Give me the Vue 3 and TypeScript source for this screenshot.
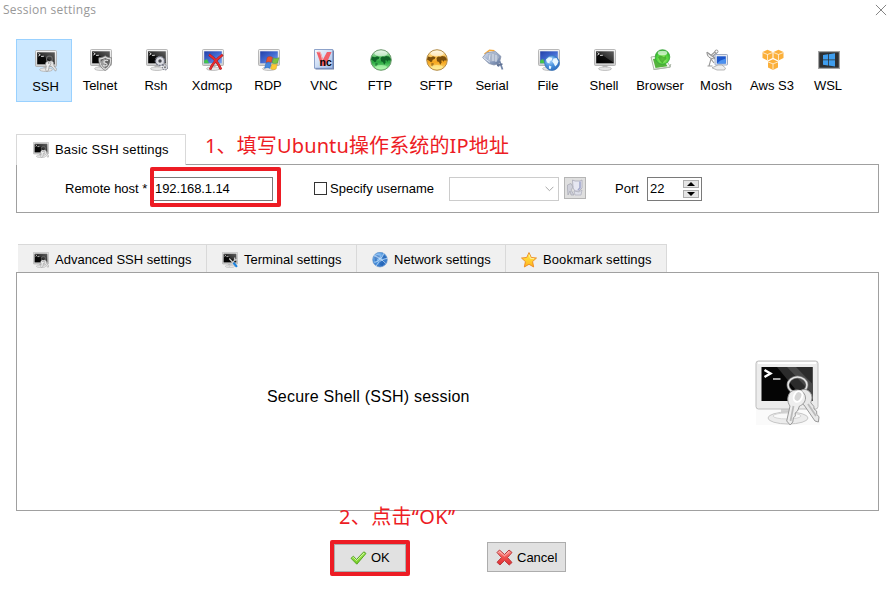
<script setup lang="ts">
import { ref } from 'vue'

interface SessionType {
  id: string
  label: string
}

interface SettingsTab {
  icon: string
  label: string
  size: string
}

const sessions: SessionType[] = [
  { id: 'ssh', label: 'SSH' },
  { id: 'telnet', label: 'Telnet' },
  { id: 'rsh', label: 'Rsh' },
  { id: 'xdmcp', label: 'Xdmcp' },
  { id: 'rdp', label: 'RDP' },
  { id: 'vnc', label: 'VNC' },
  { id: 'ftp', label: 'FTP' },
  { id: 'sftp', label: 'SFTP' },
  { id: 'serial', label: 'Serial' },
  { id: 'file', label: 'File' },
  { id: 'shell', label: 'Shell' },
  { id: 'browser', label: 'Browser' },
  { id: 'mosh', label: 'Mosh' },
  { id: 'aws', label: 'Aws S3' },
  { id: 'wsl', label: 'WSL' },
]

const tabs: SettingsTab[] = [
  { icon: 'ssh', label: 'Advanced SSH settings', size: 'advanced' },
  { icon: 'terminal', label: 'Terminal settings', size: 'terminal' },
  { icon: 'network', label: 'Network settings', size: 'network' },
  { icon: 'star', label: 'Bookmark settings', size: 'bookmark' },
]

const selected = ref('ssh')
const host = ref('192.168.1.14')
const useName = ref(false)
const port = ref('22')
</script>

<template>
  <div class="window">
    <svg class="sprite" width="0" height="0" aria-hidden="true">
      <defs>
        <linearGradient id="gBezel" x1="0" y1="0" x2="0" y2="1">
          <stop offset="0" stop-color="#f4f4f4" />
          <stop offset="1" stop-color="#cfcfcf" />
        </linearGradient>
        <linearGradient id="gScreen" x1="0" y1="1" x2="1" y2="0">
          <stop offset="0" stop-color="#000" />
          <stop offset=".5" stop-color="#0c0c0c" />
          <stop offset=".54" stop-color="#333" />
          <stop offset="1" stop-color="#606060" />
        </linearGradient>
        <linearGradient id="gBlue" x1="0" y1="0" x2="1" y2="1">
          <stop offset="0" stop-color="#2440a8" />
          <stop offset=".5" stop-color="#4169d0" />
          <stop offset="1" stop-color="#7ea6f0" />
        </linearGradient>
        <linearGradient id="gGreen" x1="0" y1="0" x2="0" y2="1">
          <stop offset="0" stop-color="#d8f0d8" />
          <stop offset=".35" stop-color="#5cc267" />
          <stop offset=".6" stop-color="#2aa740" />
          <stop offset="1" stop-color="#9df59d" />
        </linearGradient>
        <linearGradient id="gGold" x1="0" y1="0" x2="0" y2="1">
          <stop offset="0" stop-color="#fff4cc" />
          <stop offset=".35" stop-color="#fbc455" />
          <stop offset=".6" stop-color="#f5a51c" />
          <stop offset="1" stop-color="#ffe58a" />
        </linearGradient>
        <linearGradient id="gSteel" x1="0" y1="0" x2="1" y2="1">
          <stop offset="0" stop-color="#dfe6f2" />
          <stop offset=".5" stop-color="#9aabc9" />
          <stop offset="1" stop-color="#60759c" />
        </linearGradient>
        <radialGradient id="gGlobe" cx=".35" cy=".3" r=".8">
          <stop offset="0" stop-color="#b6dcff" />
          <stop offset=".5" stop-color="#4a93de" />
          <stop offset="1" stop-color="#2766bb" />
        </radialGradient>
        <radialGradient id="gLime" cx=".5" cy=".65" r=".65">
          <stop offset="0" stop-color="#b8f77a" />
          <stop offset=".6" stop-color="#4fd03c" />
          <stop offset="1" stop-color="#2aa52c" />
        </radialGradient>
        <linearGradient id="gVnc" x1="0" y1="0" x2="1" y2="1">
          <stop offset="0" stop-color="#f6fbff" />
          <stop offset="1" stop-color="#a3bdea" />
        </linearGradient>
        <linearGradient id="gCheck" x1="0" y1="0" x2="0" y2="1">
          <stop offset="0" stop-color="#a6ec5c" />
          <stop offset="1" stop-color="#75cc22" />
        </linearGradient>
        <linearGradient id="gRed" x1="0" y1="0" x2="0" y2="1">
          <stop offset="0" stop-color="#ff9d98" />
          <stop offset=".5" stop-color="#f0504e" />
          <stop offset="1" stop-color="#dd2c30" />
        </linearGradient>
        <linearGradient id="gStar" x1="0" y1="0" x2="0" y2="1">
          <stop offset="0" stop-color="#fff04a" />
          <stop offset="1" stop-color="#ffb31c" />
        </linearGradient>

        <g id="stand">
          <path d="M8.5 16h5v3h-5z" fill="#c3c3c3" />
          <ellipse cx="11" cy="19.7" rx="6.5" ry="1.8" fill="#e6e6e6" stroke="#a5a5a5" stroke-width=".6" />
        </g>
        <g id="crt">
          <use href="#stand" />
          <rect x=".5" y=".5" width="21" height="16" rx="1" fill="url(#gBezel)" stroke="#a8a8a8" stroke-width=".8" />
          <rect x="2.2" y="2.3" width="17.6" height="12" fill="url(#gScreen)" />
          <path d="M3.4 3.6 5.3 4.8 3.4 6M6 6.3h2.8" fill="none" stroke="#fff" stroke-width=".9" />
        </g>
        <g id="crtBlue">
          <use href="#stand" />
          <rect x=".5" y=".5" width="21" height="16" rx="1" fill="url(#gBezel)" stroke="#a8a8a8" stroke-width=".8" />
          <rect x="2.2" y="2.3" width="17.6" height="12" fill="url(#gBlue)" />
        </g>
        <g id="land">
          <path d="M1 10.500 2 7.500l3 .8 2-1 2.500 1-.8 1.700-2 .8-.7 2-1.500.2L3.500 12z" />
          <path d="M5.500 13.800 8 14.500l-.8 2-1 1.500-1-2z" opacity=".6" />
          <path d="m10.500 9 1.500-1.500 2.500.3L16 7l3 .5 1.800 2.500-.4 1.800-1.800-.5-1 1.500-1.400-1.600-1 .5.500 1.600-1.500 2.400-1.200-2.600-2-.9z" />
        </g>

        <symbol id="i-shell" viewBox="0 0 22 22"><use href="#crt" /></symbol>
        <symbol id="i-ssh" viewBox="0 0 22 22">
          <use href="#crt" />
          <circle cx="14.4" cy="9" r="2.9" fill="none" stroke="#6d6d6d" stroke-width="1.1" />
          <path d="M14.5 11.5c2.5-1.300 4.500.3 4.200 2.600l.4 1.900 2.700 3.300-1.300 1.900-3.500-4.200-2.400-1.500z" fill="#e3e3e3" stroke="#8c8c8c" stroke-width=".6" />
          <path d="M11.500 11.800c2-1.500 4.700-.3 4.300 2-.2 1-.8 1.700-1.600 2.100l-.8 4.600-1.800 1-1-1.700.8-3.800c-1.100-.9-1.200-2.800.1-4.200z" fill="#ececec" stroke="#8c8c8c" stroke-width=".6" />
          <circle cx="13.7" cy="12.9" r=".9" fill="#999" />
        </symbol>
        <symbol id="i-telnet" viewBox="0 0 22 22">
          <use href="#crt" />
          <path d="M15.200 6.800c2 1.500 4.200 2 6.300 1.900.6 5.800-1.600 10.400-6.300 12.800-4.700-2.400-6.900-7-6.300-12.800 2.100.1 4.300-.4 6.300-1.900z" fill="#dcdcdc" stroke="#7b7b7b" stroke-width=".8" />
          <path d="M15.200 8.800c1.500 1.200 3 1.600 4.800 1.700.2 4-1.500 7.200-4.800 9-3.300-1.800-5-5-4.800-9 1.800-.1 3.300-.5 4.800-1.700z" fill="#626262" />
          <path d="M15.200 8.800v10.700c-2.600-1.500-4.200-3.700-4.700-6.500z" fill="#9d9d9d" />
          <path d="M18 11.600c-2-1-4.200.1-4.100 1.500.1 1.600 3.300.9 3.200 2.600-.1 1.300-2.400 1.700-4 .5" fill="none" stroke="#ddd" stroke-width="1.2" />
        </symbol>
        <symbol id="i-rsh" viewBox="0 0 22 22">
          <use href="#crt" />
          <circle cx="14" cy="12" r="4.5" fill="#c9cbd4" stroke="#777a88" stroke-width="1.5" stroke-dasharray="2 1.1" />
          <circle cx="14" cy="12" r="3.6" fill="#dddee4" />
          <circle cx="14" cy="12" r="1.7" fill="#44464d" />
          <circle cx="19" cy="18.3" r="2.6" fill="#dfe0e5" stroke="#7f828c" stroke-width="1.1" stroke-dasharray="1.5 .8" />
          <circle cx="19" cy="18.3" r="1" fill="#777" />
        </symbol>
        <symbol id="i-xdmcp" viewBox="0 0 22 22">
          <use href="#crtBlue" />
          <path d="M2.200 11.500 5 10l2 4.300H2.200z" fill="#43c54a" />
          <path d="M7 5.600C12 9 16.500 14 19 20.500M20.800 5.800C15.600 9.500 10.500 14.500 8 20.600" fill="none" stroke="#9c161d" stroke-width="2.500" />
          <path d="M7.200 5.700C12 9 16.500 14 19 20.200M20.300 6.100C15.600 9.500 10.500 14.500 8.200 20.200" fill="none" stroke="#e72c30" stroke-width="1.800" />
        </symbol>
        <symbol id="i-rdp" viewBox="0 0 22 22">
          <use href="#crtBlue" />
          <path d="M9.300 8.300c2-1.200 3.600-.8 5.300.1l-1.300 5.100c-1.800-1-3.400-1-5.300 0z" fill="#e9532e" stroke="#b63118" stroke-width=".4" />
          <path d="M15.400 8.800c1.700.8 3.400.8 5.600-.1l-1.400 5.200c-2 .9-3.600.8-5.400 0z" fill="#7bc440" stroke="#478f20" stroke-width=".4" />
          <path d="M7.800 14.300c1.900-1.100 3.500-.8 5.300.1l-1.300 5c-1.800-1-3.500-.9-5.300.1z" fill="#4589df" stroke="#265fae" stroke-width=".4" />
          <path d="M13.900 14.800c1.800.9 3.500.9 5.500-.1L18.100 20c-2 1-3.700.7-5.500-.1z" fill="#fcc934" stroke="#c4901c" stroke-width=".4" />
        </symbol>
        <symbol id="i-vnc" viewBox="0 0 22 22">
          <path d="M1.500 1.500H20v19H1.500z" fill="#6f81aa" />
          <path d="M.5.500h18.300v18.800H.5z" fill="url(#gVnc)" stroke="#748dbd" stroke-width=".8" />
          <path d="M2.500 3h4L9 10.500 13 3h4.500l-6 14H7.500z" fill="#f2606a" />
          <path d="M3.500 3h2.800l2.500 9" fill="none" stroke="#f8b5b8" stroke-width="1" />
          <text x="5.5" y="17" font-family="Liberation Sans, sans-serif" font-size="10.5" font-weight="700" fill="#050505">nc</text>
        </symbol>
        <symbol id="i-ftp" viewBox="0 0 22 22">
          <circle cx="11" cy="11" r="10.3" fill="url(#gGreen)" stroke="#6f9a70" />
          <use href="#land" fill="#0f6526" />
          <ellipse cx="11" cy="4.5" rx="6.5" ry="2.7" fill="#fff" opacity=".55" />
          <ellipse cx="11" cy="18" rx="6" ry="2" fill="#c6ffbf" opacity=".6" />
        </symbol>
        <symbol id="i-sftp" viewBox="0 0 22 22">
          <circle cx="11" cy="11" r="10.3" fill="url(#gGold)" stroke="#b38d4b" />
          <use href="#land" fill="#7a4e0b" />
          <ellipse cx="11" cy="4.5" rx="6.5" ry="2.7" fill="#fff" opacity=".55" />
          <ellipse cx="11" cy="18" rx="6" ry="2" fill="#fff6a6" opacity=".6" />
        </symbol>
        <symbol id="i-serial" viewBox="0 0 22 22">
          <path d="M2.500 5 7.500 1.300l5 .4" fill="none" stroke="#f4a738" stroke-width="1.5" />
          <path d="M.6 8.500 4.500 3.800 13.500 2.500 19 7.500l-2 7-5 1.500-5-1.500z" fill="url(#gSteel)" stroke="#8592ab" stroke-width=".8" />
          <path d="M6 5 13 4l4 4-2 4-7 .5z" fill="#a9b5ca" />
          <path d="M1.500 8.600 8 13.300M8 5.500l-1 6M11 5v7M14 6v7" fill="none" stroke="#dce3ee" stroke-width="1" />
          <path d="m14.500 13 2.500 4.500M17.500 12l3 8.500" stroke="#7386a8" stroke-width="1.8" />
          <path d="m15 16.500 5.500-1.500" stroke="#5f7092" stroke-width="1.3" />
        </symbol>
        <symbol id="i-file" viewBox="0 0 22 22">
          <use href="#crtBlue" />
          <path d="M2.200 11.500 5 10l2 4.300H2.200z" fill="#43c54a" />
          <circle cx="14" cy="14" r="7.4" fill="url(#gGlobe)" stroke="#3b76b8" stroke-width=".7" />
          <path d="m8 10.500 3-2.300 3.300.5-.5 2.500-2 .8-.3 2.600-2.400-1zM15.500 9.500l3-.5 2 3.500-1.300 3-2 2-1.500-3-1.500-2zM11 16.500l2.500 1-1 2.700-1.600-.6z" fill="#e9f7ff" />
        </symbol>
        <symbol id="i-browser" viewBox="0 0 22 22">
          <path d="m1 8 12-2 7.500 12L4 20.500z" fill="#f5f8f3" stroke="#9aa596" stroke-width=".8" />
          <path d="m3 10 9-1.500 5.500 8.800-12 1.700z" fill="#55b33d" />
          <circle cx="12.5" cy="8" r="7.3" fill="url(#gLime)" stroke="#39a638" stroke-width=".8" />
          <path d="m8 8 2.500-1.500L14 8l2-1 .5 3-2.500 2-1.500 2.500L10 12z" fill="#2c9c1e" opacity=".65" />
          <ellipse cx="12.5" cy="4" rx="4.8" ry="2.3" fill="#fff" opacity=".65" />
          <path d="m3.500 20.500 16.500-2.300.8-3.200" fill="none" stroke="#aeb9aa" />
        </symbol>
        <symbol id="i-mosh" viewBox="0 0 22 22">
          <path d="M1 3c-.2 4.500 3 7.300 8.200 6.700z" fill="#f1f1f1" stroke="#8e8e8e" />
          <path d="m4.800 6.500 5.700-5M7 7l4.500-4M1 3.500l9 6M3 17l2-7 3 4M1.500 17h5" fill="none" stroke="#9a9a9a" stroke-width="1.1" />
          <circle cx="10.500" cy="2.500" r="1.500" fill="#fff" stroke="#808080" stroke-width=".8" />
          <rect x="9" y="5.5" width="12.5" height="10.5" rx=".8" fill="#e7eaf1" stroke="#8a99b5" stroke-width=".8" />
          <path d="M10.800 7.300h9v7.200h-9z" fill="#1c56cb" />
          <path d="m10.800 14.500 3.700-3 5.300-2v5z" fill="#4b91ef" />
          <path d="m12 16-6 2.800 5 2.200h7.500l1-2L16 16z" fill="#eee" stroke="#9b9b9b" stroke-width=".7" />
        </symbol>
        <g id="cube">
          <path d="m5.500 0 5 2.200v6.100l-5 2.500-5-2.500V2.200z" fill="#fbb03b" />
          <path d="m.5 2.700 5 2 5-2M5.500 4.700v5.800" fill="none" stroke="#fff" stroke-width=".7" />
        </g>
        <symbol id="i-aws" viewBox="0 0 22 22">
          <use href="#cube" y=".8" /><use href="#cube" x="11" y=".8" /><use href="#cube" x="5.5" y="10.2" />
        </symbol>
        <symbol id="i-wsl" viewBox="0 0 22 22">
          <path d="M.6 2.600h20.800v16.800H.6z" fill="#2d3033" stroke="#a5a5a5" stroke-width="1.2" />
          <path d="m5 6 5-.7v5.200H5zM10.800 5.200l6.200-.9v6.200h-6.200zM5 11.300h5v5.200l-5-.7zM10.800 11.300H17v6.200l-6.200-.9z" fill="#3f9eee" />
        </symbol>
        <symbol id="i-terminal" viewBox="0 0 22 22">
          <use href="#crt" />
          <path d="m15.500 14.500 5 6" stroke="#1d82dd" stroke-width="3" />
          <path d="m10 9 5 5.500M9.500 20.500l8.500-10M17.500 11V7.500M18 11l3.500-.5" stroke="#ccc" stroke-width="1.8" />
        </symbol>
        <symbol id="i-network" viewBox="0 0 22 22">
          <circle cx="11" cy="10.5" r="10" fill="url(#gGlobe)" stroke="#6593ca" />
          <path d="m3 7 4-3 4 1-1 3-3 2-1 4-2-2zM13 6l4-2 2.500 4-2 2-4-1zM10 12l6-1 2 3-4 5-4-2z" fill="#144fa4" opacity=".5" />
          <path d="M3 14C8 14 14 9 16 2M3 5c5 2 12 6 16 11M6 19C9 13 15 9 21 9" fill="none" stroke="#d9ecff" stroke-width="1" />
        </symbol>
        <symbol id="i-star" viewBox="0 0 22 22">
          <path d="m11 .8 3.100 6.700 7.200.8-5.400 4.900 1.500 7.400L11 16.900l-6.400 3.700 1.500-7.400L.7 8.300l7.200-.8z" fill="url(#gStar)" stroke="#ec8b24" stroke-width="1.3" stroke-linejoin="round" />
          <path d="m11 3.500 2 5.200 5 .5" fill="none" stroke="#fffbc4" stroke-width="1" />
        </symbol>
        <symbol id="i-check" viewBox="0 0 17 16">
          <path d="M1 8.300 3.400 6.200 6.500 9.500 13.800 1.800 16 3.400 6.800 14.200z" fill="url(#gCheck)" stroke="#4b9d19" stroke-width=".9" stroke-linejoin="round" />
          <path d="m2.500 8 1-.6 3 3.100 7.500-7.400" fill="none" stroke="#d7fba9" stroke-width=".9" />
        </symbol>
        <symbol id="i-cross" viewBox="0 0 17 17">
          <path d="M1 3.500 3.500 1 8.500 5.500 13 1l3 2.500L11.500 8.500 16 13.500 13.200 16 8.500 11.500 4 16 1 13.300 5.500 8.500z" fill="url(#gRed)" stroke="#b83a3e" stroke-linejoin="round" />
          <path d="M2.500 3.700 3.600 2.500l4.900 4.400L13 2.500" fill="none" stroke="#ffd0cb" stroke-width=".8" />
        </symbol>
        <symbol id="i-user" viewBox="0 0 18 18">
          <path d="M6.500 1 9 2h5l2-1v8l-3 3H9L7 9z" fill="#e6e7f2" stroke="#a8aab8" stroke-width=".8" />
          <path d="M14 2.500V9l-2 2" fill="none" stroke="#a2a8cc" stroke-width="1.6" />
          <path d="M1.500 6 5 4.500 7 8l-2 3 3 5H5L4 12l-2 4-.5-6z" fill="#cfd0da" stroke="#a5a6b1" stroke-width=".7" />
          <path d="m8 12 5 1 3-2-1 5H9z" fill="#dddfe9" stroke="#acaebb" stroke-width=".7" />
        </symbol>
        <symbol id="i-keys" viewBox="0 0 66 66">
          <path d="M1 49h64v16H1z" fill="#fafafa" />
          <path d="M26 47h12v10H26z" fill="#d3d3d3" />
          <ellipse cx="33" cy="58" rx="20" ry="6" fill="#ececec" stroke="#c6c6c6" />
          <ellipse cx="32" cy="56" rx="14" ry="3" fill="#f9f9f9" stroke="#d6d6d6" />
          <rect x="1" y="1" width="62" height="48" rx="2.5" fill="#ececec" stroke="#bdbdbd" />
          <path d="M3 3h58" stroke="#fff" stroke-width="2" />
          <path d="M6.500 7h51v34h-51z" fill="#050505" />
          <path d="M22 7h35.500v34H50z" fill="#2b2b2b" />
          <path d="M32 7h9l16.500 17v10z" fill="#484848" />
          <path d="m9.500 10 6 3.500-6 3.500" fill="none" stroke="#fff" stroke-width="2.4" />
          <path d="M18 19h7.500" stroke="#ddd" stroke-width="1.5" />
          <ellipse cx="42.5" cy="25" rx="9.5" ry="8" fill="none" stroke="#757575" stroke-width="2.8" />
          <ellipse cx="42.5" cy="25" rx="9.5" ry="8" fill="none" stroke="#e5e5e5" stroke-width="1.5" />
          <path d="M45 31c5-4 12 0 12 7-.3 2-1 3.300-1.200 4.800l3 3.500.3 2.700 2.500 2 .2 3.500 2.200 2.200-.6 5.300L60 61 49 45c-6-3-8-9-4-14z" fill="#e8e8e8" stroke="#9a9a9a" />
          <path d="m53 44 8 12" stroke="#bbb" stroke-width="1.8" />
          <path d="M35.500 32c5-4 15-2 15 6 0 4-3 7-6 8l-2 5-2.300 2 .1 3-2 2-.5 4-2.600 3-3.500-4L35 46c-3-4-3-10 .5-14z" fill="#eee" stroke="#9a9a9a" />
          <ellipse cx="43" cy="36.5" rx="4" ry="5.500" transform="rotate(25 43 36.500)" fill="#d5d5d5" stroke="#fff" stroke-width="2" />
          <path d="m38.500 46-3 15" stroke="#bbb" stroke-width="1.8" />
        </symbol>
      </defs>
    </svg>

    <header class="titlebar">
      <span class="title">Session settings</span>
      <svg class="close" width="12" height="12" viewBox="0 0 12 12"><path d="M.9.9l10.200 10.200M11.100.9.900 11.100" stroke="#858585" stroke-width="1" /></svg>
    </header>

    <nav class="toolbar">
      <div v-for="s in sessions" :key="s.id" class="session" :class="{ active: s.id === selected }" @click="selected = s.id">
        <svg class="session-icon"><use :href="'#i-' + s.id" /></svg>
        <span>{{ s.label }}</span>
      </div>
    </nav>

    <section class="basic">
      <div class="basic-tab">
        <svg class="tab-icon"><use href="#i-ssh" /></svg>
        <span>Basic SSH settings</span>
      </div>
      <div class="basic-panel">
        <label class="host-label">Remote host *</label>
        <div class="host-box"><input v-model="host" class="host-input" type="text" /></div>
        <span class="check" :class="{ on: useName }" @click="useName = !useName"></span>
        <span class="check-label">Specify username</span>
        <div class="combo"><svg width="9" height="6" viewBox="0 0 9 6"><path d="m.6.8 3.900 3.900L8.400.8" fill="none" stroke="#a8a8a8" /></svg></div>
        <div class="user-button"><svg width="18" height="18"><use href="#i-user" /></svg></div>
        <span class="port-label">Port</span>
        <div class="port-box">
          <input v-model="port" class="port-input" type="text" />
          <div class="spin">
            <span><svg width="8" height="4" viewBox="0 0 8 4"><path d="M4 0 8 4H0z" /></svg></span>
            <span><svg width="8" height="4" viewBox="0 0 8 4"><path d="M0 0h8L4 4z" /></svg></span>
          </div>
        </div>
      </div>
    </section>

    <section class="details">
      <div class="tabs">
        <div v-for="t in tabs" :key="t.label" class="tab" :class="t.size">
          <svg class="tab-icon"><use :href="'#i-' + t.icon" /></svg>
          <span>{{ t.label }}</span>
        </div>
      </div>
      <div class="details-panel">
        <span class="kind">Secure Shell (SSH) session</span>
        <svg class="kind-icon"><use href="#i-keys" /></svg>
      </div>
    </section>

    <footer class="actions">
      <div class="ok-mark"><button class="ok"><svg width="17" height="16"><use href="#i-check" /></svg>OK</button></div>
      <button class="cancel"><svg width="17" height="17"><use href="#i-cross" /></svg><span>Cancel</span></button>
    </footer>

    <div class="note note-host">1、填写Ubuntu操作系统的IP地址</div>
    <div class="note note-ok">2、点击“OK”</div>
  </div>
</template>

<style>
body { margin: 0; background: #fff; overflow: hidden; }
</style>

<style scoped>
.window {
  position: relative;
  box-sizing: border-box;
  width: 896px;
  height: 599px;
  background: #fff;
  color: #000;
  font: 13px/16px "Liberation Sans", Arial, sans-serif;
  overflow: hidden;
}
.window *, .window *::before { box-sizing: border-box; }
.window svg { display: block; flex: none; }
.window .sprite { position: absolute; }
.titlebar { display: flex; justify-content: space-between; height: 20px; padding: 1px 9px 0 3px; }
.title { color: #999; font: 12px/17px "Open Sans", "Noto Sans", sans-serif; letter-spacing: .25px; }
.titlebar .close { margin-top: 3px; }
.toolbar { display: flex; margin: 19px 0 0 16px; height: 63px; }
.session { display: flex; flex-direction: column; align-items: center; width: 56px; height: 63px; padding-top: 10px; white-space: nowrap; }
.session.active { padding: 10px 0 0 3px; background: #cce8ff; border: 1px solid #99d1ff; }
.session-icon { width: 22px; height: 22px; margin-left: 1px; }
.session span { margin-top: 7px; }
.basic { margin: 32px 17px 0 16px; }
.basic-tab { display: flex; align-items: center; position: relative; width: 170px; height: 31px; margin-bottom: -1px; padding-left: 16px; background: #fff; border: 1px solid #d9d9d9; border-bottom: 0; letter-spacing: .18px; }
.tab-icon { width: 16px; height: 16px; margin-right: 6px; }
.basic-panel { display: flex; height: 49px; padding: 3px 0 0 48px; border: 1px solid #a0a0a0; line-height: 41px; white-space: nowrap; }
.host-label { width: 85px; }
.host-box { width: 131px; height: 40px; margin-top: -1px; padding: 5px 4px 5px 0; border: 4px solid #ed1c24; border-radius: 2px; }
.host-input { display: block; width: 119px; height: 24px; margin: 1px 0 0; padding: 0 0 2px 1px; border: 1px solid #7a7a7a; border-left: 0; outline: 0; background: #fff; font: 13px/20px "Liberation Sans", Arial, sans-serif; letter-spacing: -.1px; }
.check { width: 13px; height: 13px; margin: 14px 3px 0 33px; border: 1px solid #333; }
.check.on { background: #333; }
.check-label { width: 119px; }
.combo { display: flex; justify-content: flex-end; align-items: center; width: 110px; height: 24px; margin-top: 9px; padding-right: 4px; border: 1px solid #ccc; }
.user-button { display: flex; align-items: center; justify-content: center; width: 22px; height: 22px; margin: 9px 29px 0 5px; background: #dfdfdf; border: 1px solid #b5b5b5; }
.port-label { width: 32px; }
.port-box { display: flex; width: 55px; height: 24px; margin-top: 9px; padding: 2px; border: 1px solid #7a7a7a; }
.port-input { width: 33px; height: 18px; padding: 0; border: 0; outline: 0; background: transparent; font: 13px/18px "Liberation Sans", Arial, sans-serif; }
.spin { display: flex; flex-direction: column; gap: 2px; }
.spin span { display: flex; align-items: center; justify-content: center; width: 16px; height: 8px; background: #e5e5e5; border: 1px solid #adadad; }
.details { margin: 31px 17px 0 16px; }
.tabs { display: flex; width: 651px; height: 28px; padding-left: 2px; }
.tab { display: flex; align-items: center; height: 28px; padding: 2px 0 0 15px; background: #f0f0f0; border-top: 1px solid #d9d9d9; border-right: 1px solid #d9d9d9; white-space: nowrap; }
.advanced { width: 189px; }
.terminal { width: 150px; }
.network { width: 149px; letter-spacing: .05px; }
.bookmark { width: 161px; letter-spacing: .1px; }
.details-panel { display: flex; align-items: flex-start; height: 239px; padding: 87px 0 0 250px; border: 1px solid #a0a0a0; }
.kind { width: 488px; margin-top: 27px; font-size: 16px; line-height: 20px; letter-spacing: .2px; }
.kind-icon { width: 66px; height: 66px; margin-left: -.5px; }
.actions { display: flex; align-items: flex-start; margin: 29px 0 0 330px; }
.ok-mark { width: 80px; height: 36px; margin-right: 77px; padding: 0; border: 4px solid #ed1c24; border-radius: 2px; background: #fff; }
.actions button { display: flex; align-items: center; margin: 0; color: #000; background: #e1e1e1; border: 1px solid #adadad; font: 13px/16px "Liberation Sans", Arial, sans-serif; }
.actions .ok { width: 72px; height: 28px; padding: 0 0 0 15px; gap: 4px; }
.actions .cancel { width: 79px; height: 30px; margin-top: 2px; padding: 0 0 0 8px; gap: 4px; }
.cancel span { padding-top: 1px; }
.note { position: absolute; color: #ed1c24; white-space: nowrap; font: 20px/28px "Noto Sans", "Noto Sans CJK SC", sans-serif; letter-spacing: .13px; }
.note-host { left: 205px; top: 132px; }
.note-ok { left: 339px; top: 503px; letter-spacing: .35px; }
</style>
